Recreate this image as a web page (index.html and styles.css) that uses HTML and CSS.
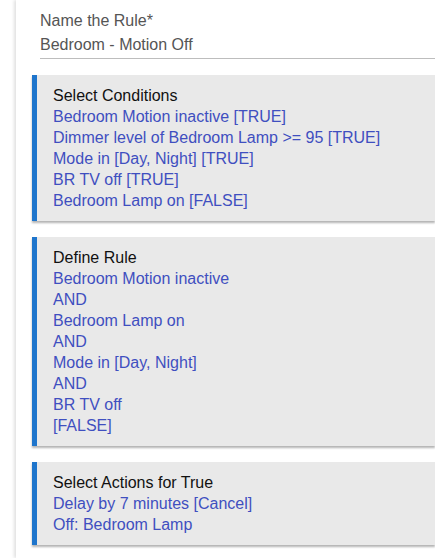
FILE: index.html
```html
<!DOCTYPE html>
<html lang="en">

<head>
    <meta charset="UTF-8">
    <meta name="viewport" content="width=device-width, initial-scale=1.0">
    <title>Rule</title>
    <link rel="stylesheet" href="styles.css">
</head>

<body>
    <div class="page">
        <div class="panel">
            <div class="field">
                <label>Name the Rule*</label>
                <div class="value">Bedroom - Motion Off</div>
            </div>

            <div class="card">
                <div class="title">Select Conditions</div>
                <a>Bedroom Motion inactive [TRUE]</a>
                <a>Dimmer level of Bedroom Lamp &gt;= 95 [TRUE]</a>
                <a>Mode in [Day, Night] [TRUE]</a>
                <a>BR TV off [TRUE]</a>
                <a>Bedroom Lamp on [FALSE]</a>
            </div>

            <div class="card">
                <div class="title">Define Rule</div>
                <a>Bedroom Motion inactive</a>
                <a>AND</a>
                <a>Bedroom Lamp on</a>
                <a>AND</a>
                <a>Mode in [Day, Night]</a>
                <a>AND</a>
                <a>BR TV off</a>
                <a>[FALSE]</a>
            </div>

            <div class="card">
                <div class="title">Select Actions for True</div>
                <a>Delay by 7 minutes [Cancel]</a>
                <a>Off: Bedroom Lamp</a>
            </div>
        </div>
    </div>
</body>

</html>
```

FILE: styles.css
```css
* {
    padding: 0;
    margin: 0;
    box-sizing: border-box;
}

body {
    background: #fff;
    font-family: "Liberation Sans", Arial, sans-serif;
}

.page {
    padding-left: 16px;
}

.panel {
    background: #fff;
    box-shadow: -2px 0 3px rgba(0, 0, 0, 0.12);
    padding: 9px 0 12px 16px;
    min-height: 558px;
    display: flex;
    flex-direction: column;
    gap: 16px;
}

.field {
    margin-left: 8px;
    display: flex;
    flex-direction: column;
    color: #555;
    font-size: 16px;
    line-height: 24px;
    border-bottom: 1px solid #bdbdbd;
    padding-bottom: 1px;
}

.card {
    background: #e9e9e9;
    border-left: 5px solid #1e75cc;
    box-shadow: 0 2px 2px rgba(0, 0, 0, 0.3);
    padding: 10px 16px;
    display: flex;
    flex-direction: column;
    font-size: 16px;
    line-height: 21px;
}

.card .title {
    color: #111;
}

.card a {
    color: #3f4fc0;
    cursor: pointer;
}
```
